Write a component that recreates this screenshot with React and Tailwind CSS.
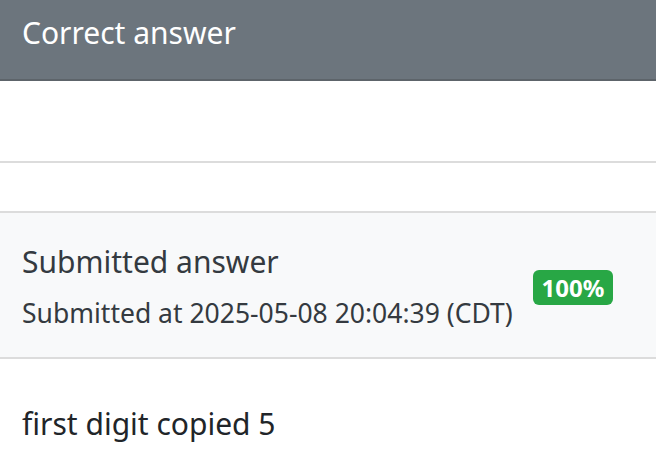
import React from 'react';

export default function App() {
    return (
        <div className="w-[656px] h-[475px] overflow-hidden bg-white text-[#212529]" style={{ fontFamily: '"Noto Sans", "Open Sans", sans-serif' }}>
            {/* Card header */}
            <div className="h-[81px] bg-[#6c757d] border-b-[2px] border-[#5d646a] px-[22px] pt-[13px]">
                <h2 className="text-[30px] leading-[40px] text-white font-normal">Correct answer</h2>
            </div>

            {/* Correct answer body (empty) */}
            <div className="h-[82px] border-b-[2px] border-[#dcdcdc]" />

            {/* Spacer section */}
            <div className="h-[50px] border-b-[2px] border-[#dcdcdc]" />

            {/* Submission header */}
            <div className="h-[146px] bg-[#f8f9fa] border-b-[2px] border-[#dcdcdc] flex items-start px-[22px]">
                <div className="flex-1 pt-[31px]">
                    <div className="text-[30px] leading-[36px] text-[#343a40]">Submitted answer</div>
                    <div className="text-[26.5px] leading-[32px] mt-[17px] text-[#343a40]">Submitted at 2025-05-08 20:04:39 (CDT)</div>
                </div>
                <div className="mt-[57px] mr-[21px] bg-[#28a745] text-white font-bold text-[24px] leading-none rounded-[6px] w-[80px] h-[35px] flex items-center justify-center">
                    100%
                </div>
            </div>

            {/* Submitted answer body */}
            <div className="px-[22px] pt-[47px]">
                <div className="text-[30px] leading-[36px]">first digit copied 5</div>
            </div>
        </div>
    );
}
